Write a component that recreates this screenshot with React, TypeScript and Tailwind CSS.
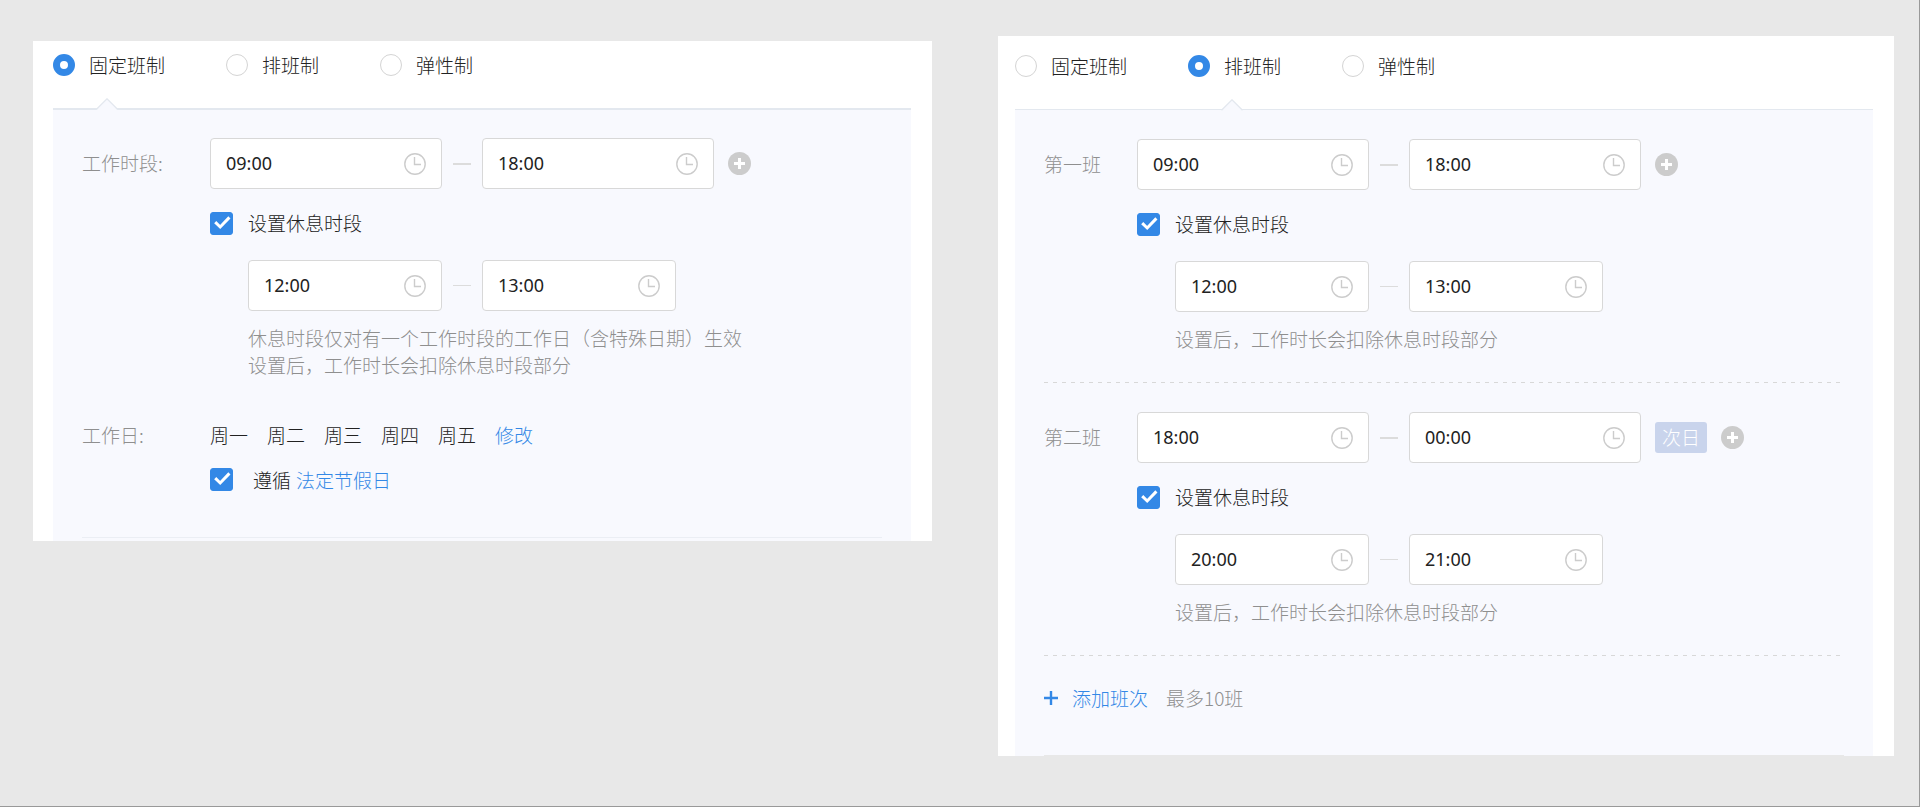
import { useId, useState, type ReactNode } from 'react';

const MODES = ['固定班制', '排班制', '弹性制'];

function ModeTabs({ initial }: { initial: number }) {
  const [selected, setSelected] = useState(initial);
  const name = useId();
  return (
    <div className="flex gap-[61px]">
      {MODES.map((mode, i) => (
        <label key={mode} className="flex h-[22px] items-center gap-[14px]">
          <input
            type="radio"
            name={name}
            checked={selected === i}
            onChange={() => setSelected(i)}
            className="size-[22px] appearance-none rounded-full border border-[#d4d4d4] bg-white checked:border-[7px] checked:border-[#3388e6]"
          />
          <span className="pb-[2px]">{mode}</span>
        </label>
      ))}
    </div>
  );
}

function Notch({ className }: { className: string }) {
  return (
    <svg viewBox="0 0 22 12" className={`absolute h-[12px] w-[22px] ${className}`} aria-hidden="true">
      <path d="M0.5 12 L11 1 L21.5 12 Z" fill="#f8f9fe" />
      <path d="M0.5 11.2 L11 0.8 L21.5 11.2" fill="none" stroke="#e3e8ef" strokeWidth="1.3" />
    </svg>
  );
}

function ClockIcon() {
  return (
    <svg viewBox="0 0 22 22" className="size-[22px] shrink-0" fill="none" stroke="#cccccc" aria-hidden="true">
      <circle cx="11" cy="11" r="10.2" strokeWidth="1.4" />
      <path d="M10.5 4 V11.5 H17" strokeWidth="1.4" />
    </svg>
  );
}

function TimeInput({ id, label, value, short }: { id?: string; label: string; value: string; short?: boolean }) {
  return (
    <div
      className={`flex h-[51px] items-center rounded-[4px] border border-[#d8d8d8] bg-white px-[15px] ${
        short ? 'w-[194px]' : 'w-[232px]'
      }`}
    >
      <input
        id={id}
        type="text"
        aria-label={label}
        defaultValue={value}
        className="w-0 min-w-0 flex-1 bg-transparent font-['Noto_Sans',sans-serif] text-[18px] font-normal outline-none"
      />
      <ClockIcon />
    </div>
  );
}

function TimeRange({
  id,
  name,
  from,
  to,
  short,
  children,
}: {
  id?: string;
  name: string;
  from: string;
  to: string;
  short?: boolean;
  children?: ReactNode;
}) {
  return (
    <div className="flex items-center">
      <TimeInput id={id} label={`${name}开始`} value={from} short={short} />
      <span className={`mx-[11px] w-[18px] bg-[#dcdcdc] ${short ? 'h-px' : 'h-[2px]'}`} />
      <TimeInput label={`${name}结束`} value={to} short={short} />
      {children}
    </div>
  );
}

function Checkbox({ id }: { id: string }) {
  return (
    <span className="grid size-[23px] shrink-0">
      <input
        id={id}
        type="checkbox"
        defaultChecked
        className="peer col-start-1 row-start-1 size-[23px] appearance-none rounded-[3px] border border-[#dcdcdc] bg-white checked:border-[#3388e6] checked:bg-[#3388e6]"
      />
      <svg
        viewBox="0 0 23 23"
        className="pointer-events-none col-start-1 row-start-1 hidden size-[23px] peer-checked:block"
        aria-hidden="true"
      >
        <path d="M5.2 10.2 L10.2 15 L19.4 5.4" fill="none" stroke="#ffffff" strokeWidth="3" />
      </svg>
    </span>
  );
}

function AddButton({ label }: { label: string }) {
  return (
    <button type="button" aria-label={label} className="ml-[14px] size-[23px]">
      <svg viewBox="0 0 23 23" className="size-[23px]" aria-hidden="true">
        <circle cx="11.5" cy="11.5" r="11.5" fill="#cccccc" />
        <path d="M11.5 6 V17 M6 11.5 H17" stroke="#ffffff" strokeWidth="3" />
      </svg>
    </button>
  );
}

function RestSection({ from, to, children }: { from: string; to: string; children: ReactNode }) {
  const id = useId();
  return (
    <>
      <div className="mt-[23px] flex h-[23px] items-center gap-[15px]">
        <Checkbox id={id} />
        <label htmlFor={id} className="pb-[2px]">
          设置休息时段
        </label>
      </div>
      <div className="mt-[25px] ml-[38px]">
        <TimeRange name="休息时段" from={from} to={to} short />
        <p className="mt-[13px] text-[#8f8f8f]">{children}</p>
      </div>
    </>
  );
}

function Shift({ name, from, to, restFrom, restTo, nextDay }: {
  name: string;
  from: string;
  to: string;
  restFrom: string;
  restTo: string;
  nextDay?: boolean;
}) {
  const id = useId();
  return (
    <section>
      <div className="flex pt-[29px] pb-[30px]">
        <label htmlFor={id} className="h-[49px] w-[93px] leading-[49px] text-[#8f8f8f]">
          {name}
        </label>
        <div>
          <TimeRange id={id} name={name} from={from} to={to}>
            {nextDay && (
              <span className="ml-[14px] flex h-[31px] w-[52px] items-center justify-center rounded-[3px] bg-[#c9d4ec] pb-[2px] text-white">
                次日
              </span>
            )}
            <AddButton label="添加时段" />
          </TimeRange>
          <RestSection from={restFrom} to={restTo}>
            设置后，工作时长会扣除休息时段部分
          </RestSection>
        </div>
      </div>
      <div className="h-px bg-[repeating-linear-gradient(90deg,#d8d8d8_0_4px,transparent_4px_9px)]" />
    </section>
  );
}

function FixedSchedule() {
  const periodId = useId();
  const holidayId = useId();
  return (
    <section className="mt-[41px] bg-white pt-[13px] pr-[21px] pl-[20px]">
      <ModeTabs initial={0} />
      <div className="relative mt-[32px] border-t-2 border-[#e3e8ef] bg-[#f8f9fe] px-[29px] pt-[28px] pb-[3px]">
        <Notch className="-top-[12px] left-[43px]" />
        <div className="flex">
          <label htmlFor={periodId} className="h-[49px] w-[128px] leading-[49px] text-[#8f8f8f]">
            工作时段:
          </label>
          <div>
            <TimeRange id={periodId} name="工作时段" from="09:00" to="18:00">
              <AddButton label="添加时段" />
            </TimeRange>
            <RestSection from="12:00" to="13:00">
              休息时段仅对有一个工作时段的工作日（含特殊日期）生效
              <br />
              设置后，工作时长会扣除休息时段部分
            </RestSection>
          </div>
        </div>
        <div className="mt-[43px] flex border-b border-[#ebeef4] pb-[44px]">
          <span className="w-[128px] text-[#8f8f8f]">工作日:</span>
          <div>
            <div className="flex gap-[19px]">
              {['周一', '周二', '周三', '周四', '周五'].map((day) => (
                <span key={day}>{day}</span>
              ))}
              <a href="#days" className="text-[#3388e6]">
                修改
              </a>
            </div>
            <div className="mt-[18px] flex items-center">
              <Checkbox id={holidayId} />
              <label htmlFor={holidayId} className="mr-[5px] ml-[20px]">
                遵循
              </label>
              <a href="#holidays" className="text-[#3388e6]">
                法定节假日
              </a>
            </div>
          </div>
        </div>
      </div>
    </section>
  );
}

function RotatingSchedule() {
  return (
    <section className="mt-[36px] bg-white pt-[19px] pr-[21px] pl-[17px]">
      <ModeTabs initial={1} />
      <div className="relative mt-[32px] border-t border-[#e3e8ef] bg-[#f8f9fe] px-[29px]">
        <Notch className="-top-[11px] left-[206px]" />
        <Shift name="第一班" from="09:00" to="18:00" restFrom="12:00" restTo="13:00" />
        <Shift name="第二班" from="18:00" to="00:00" restFrom="20:00" restTo="21:00" nextDay />
        <div className="flex gap-[18px] border-b border-[#e8e8e8] pt-[28px] pb-[44px]">
          <button type="button" className="flex items-center gap-[14px] text-[#3388e6]">
            <svg viewBox="0 0 14 14" className="size-[14px]" aria-hidden="true">
              <path d="M7 0 V14 M0 7 H14" stroke="currentColor" strokeWidth="2.4" />
            </svg>
            添加班次
          </button>
          <span className="text-[#8f8f8f]">最多10班</span>
        </div>
      </div>
    </section>
  );
}

export default function App() {
  return (
    <main className="grid min-h-screen grid-cols-[899fr_896fr] items-start gap-[66px] border-r border-b border-[#999999] bg-[#e8e8e8] pr-[25px] pl-[33px] font-['Noto_Sans_CJK_SC',sans-serif] text-[19px] leading-[27px] font-light text-[#222222]">
      <FixedSchedule />
      <RotatingSchedule />
    </main>
  );
}
